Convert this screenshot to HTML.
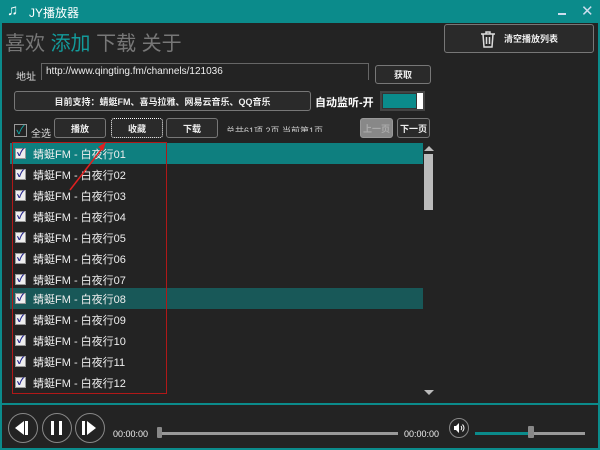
<!DOCTYPE html><html><head><meta charset="utf-8"><style>
*{margin:0;padding:0;box-sizing:border-box}
body{width:600px;height:450px;background:#232323;font-family:"Liberation Sans","Noto Sans CJK SC",sans-serif;color:#ddd;position:relative;overflow:hidden;font-size:11px}
.a{position:absolute}
.btn{position:absolute;background:#2a2a2a;border:1px solid #777;border-radius:3px;color:#eee;font-size:9px;font-weight:bold;display:flex;align-items:center;justify-content:center}
.row{position:absolute;left:10px;width:413px;height:21px}
.cb{position:absolute;left:5px;top:5px;width:11px;height:11px;background:#eee;border:1px solid #999;color:#22228a;font-size:10px;line-height:9px;text-align:center;font-weight:bold}
.row span{position:absolute;left:23px;top:3px;font-size:11px;color:#eee}
.cir{position:absolute;width:30px;height:30px;border:1.5px solid #888;border-radius:50%}
</style></head><body>
<div class="a" style="left:0;top:0;width:600px;height:23px;background:#0b8b8b"></div>
<div class="a" style="left:7px;top:2px;font-size:15px;color:#fff">♫</div>
<div class="a" style="left:29px;top:4px;font-size:12px;color:#fff">JY播放器</div>
<div class="a" style="left:558px;top:13px;width:8px;height:2px;background:#cde"></div>
<div class="a" style="left:581px;top:2px;font-size:15px;color:#cde">✕</div>
<div class="a" style="left:0;top:23px;width:2px;height:427px;background:#0b8b8b"></div>
<div class="a" style="left:598px;top:23px;width:2px;height:427px;background:#0b8b8b"></div>
<div class="a" style="left:5px;top:27px;font-size:20px;color:#777;letter-spacing:0">喜欢 <span style="color:#139a9a">添加</span> 下载 关于</div>
<div class="btn" style="left:444px;top:24px;width:150px;height:29px;font-size:9px"><svg width="16" height="18" style="margin-right:8px" viewBox="0 0 16 18" fill="none" stroke="#ddd" stroke-width="1.5"><path d="M1 4h14M6 4V2h4v2M3 4l1 13h8l1-13M6.5 7v7M9.5 7v7"/></svg>清空播放列表</div>
<div class="a" style="left:16px;top:68px;font-size:10px">地址</div>
<div class="a" style="left:41px;top:63px;width:328px;height:17px;border:1px solid #666;border-bottom:none;background:#232323"></div>
<div class="a" style="left:46px;top:66px;font-size:10px;color:#eee">http://www.qingting.fm/channels/121036</div>
<div class="btn" style="left:375px;top:65px;width:56px;height:19px">获取</div>
<div class="btn" style="left:14px;top:91px;width:297px;height:20px">目前支持：蜻蜓FM、喜马拉雅、网易云音乐、QQ音乐</div>
<div class="a" style="left:315px;top:94px;font-size:11px;font-weight:bold;color:#fff">自动监听-开</div>
<div class="a" style="left:380px;top:91px;width:45px;height:20px;background:#fff;border:2px solid #444"><div style="width:35px;height:16px;background:#0b8b8b;border:1px solid #333"></div></div>
<div class="a" style="left:14px;top:124px;width:13px;height:13px;border:1px solid #999;color:#1aa;font-size:12px;line-height:11px;text-align:center">✓</div>
<div class="a" style="left:31px;top:125px;font-size:10px">全选</div>
<div class="btn" style="left:54px;top:118px;width:52px;height:20px">播放</div>
<div class="btn" style="left:111px;top:118px;width:52px;height:20px;border:1px dotted #fff">收藏</div>
<div class="btn" style="left:166px;top:118px;width:52px;height:20px">下载</div>
<div class="a" style="left:226px;top:124px;font-size:9px;color:#ccc;height:8px;overflow:hidden">总共61项 2页 当前第1页</div>
<div class="btn" style="left:360px;top:118px;width:33px;height:20px;background:#888;color:#aaa;border-color:#999">上一页</div>
<div class="btn" style="left:397px;top:118px;width:33px;height:20px">下一页</div>
<div class="row" style="top:143px;background:#0e7f7f"><div class="cb">✓</div><span>蜻蜓FM - 白夜行01</span></div>
<div class="row" style="top:164px"><div class="cb">✓</div><span>蜻蜓FM - 白夜行02</span></div>
<div class="row" style="top:185px"><div class="cb">✓</div><span>蜻蜓FM - 白夜行03</span></div>
<div class="row" style="top:206px"><div class="cb">✓</div><span>蜻蜓FM - 白夜行04</span></div>
<div class="row" style="top:227px"><div class="cb">✓</div><span>蜻蜓FM - 白夜行05</span></div>
<div class="row" style="top:248px"><div class="cb">✓</div><span>蜻蜓FM - 白夜行06</span></div>
<div class="row" style="top:269px"><div class="cb">✓</div><span>蜻蜓FM - 白夜行07</span></div>
<div class="row" style="top:288px;background:#185858"><div class="cb">✓</div><span>蜻蜓FM - 白夜行08</span></div>
<div class="row" style="top:309px"><div class="cb">✓</div><span>蜻蜓FM - 白夜行09</span></div>
<div class="row" style="top:330px"><div class="cb">✓</div><span>蜻蜓FM - 白夜行10</span></div>
<div class="row" style="top:351px"><div class="cb">✓</div><span>蜻蜓FM - 白夜行11</span></div>
<div class="row" style="top:372px"><div class="cb">✓</div><span>蜻蜓FM - 白夜行12</span></div>
<div class="a" style="left:424px;top:146px;border-left:5px solid transparent;border-right:5px solid transparent;border-bottom:5px solid #bbb"></div>
<div class="a" style="left:424px;top:154px;width:9px;height:56px;background:#bbb"></div>
<div class="a" style="left:424px;top:390px;border-left:5px solid transparent;border-right:5px solid transparent;border-top:5px solid #bbb"></div>
<div class="a" style="left:12px;top:142px;width:155px;height:252px;border:1px solid #b01818"></div>
<svg class="a" style="left:0;top:0" width="600" height="450"><line x1="70" y1="190" x2="104" y2="146" stroke="#e02020" stroke-width="1.5"/><polygon points="106,142 98,147 103,151" fill="#e02020"/></svg>
<div class="a" style="left:0;top:403px;width:600px;height:2px;background:#0b8b8b"></div>
<div class="a" style="left:0;top:448px;width:600px;height:2px;background:#0b8b8b"></div>
<div class="cir" style="left:8px;top:413px"></div><div class="a" style="left:15px;top:421px;border-right:9px solid #fff;border-top:7px solid transparent;border-bottom:7px solid transparent"></div><div class="a" style="left:25px;top:421px;width:3px;height:14px;background:#fff"></div>
<div class="cir" style="left:42px;top:413px"></div><div class="a" style="left:51px;top:421px;width:3px;height:14px;background:#fff"></div><div class="a" style="left:59px;top:421px;width:3px;height:14px;background:#fff"></div>
<div class="cir" style="left:75px;top:413px"></div><div class="a" style="left:82px;top:421px;width:3px;height:14px;background:#fff"></div><div class="a" style="left:87px;top:421px;border-left:9px solid #fff;border-top:7px solid transparent;border-bottom:7px solid transparent"></div>
<div class="a" style="left:113px;top:429px;font-size:9px;color:#eee">00:00:00</div>
<div class="a" style="left:160px;top:432px;width:238px;height:3px;background:#999"></div>
<div class="a" style="left:157px;top:427px;width:5px;height:11px;background:#888;border-radius:1px"></div>
<div class="a" style="left:404px;top:429px;font-size:9px;color:#eee">00:00:00</div>
<div class="cir" style="left:449px;top:418px;width:20px;height:20px"></div>
<svg class="a" style="left:453px;top:422px" width="12" height="12" viewBox="0 0 12 12"><path d="M1 4h2l3-3v10L3 8H1z" fill="#fff"/><path d="M8 4q1.5 2 0 4M9.5 2.5q3 3.5 0 7" stroke="#fff" fill="none" stroke-width="1"/></svg>
<div class="a" style="left:475px;top:432px;width:56px;height:3px;background:#0b8b8b"></div>
<div class="a" style="left:531px;top:432px;width:54px;height:3px;background:#999"></div>
<div class="a" style="left:528px;top:426px;width:6px;height:12px;background:#888;border-radius:1px"></div>
</body></html>
